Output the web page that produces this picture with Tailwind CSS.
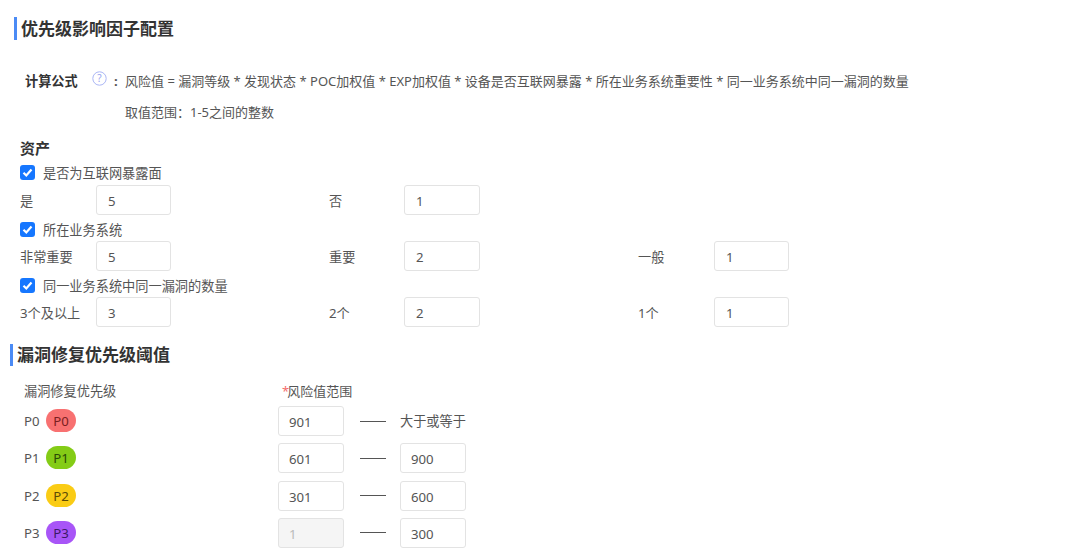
<!DOCTYPE html>
<html lang="zh-CN">
<head>
<meta charset="utf-8">
<script src="https://cdn.jsdelivr.net/npm/@tailwindcss/browser@4"></script>
<title>优先级影响因子配置</title>
</head>
<body class="bg-white">
<main class="w-[1080px] h-[555px] overflow-hidden text-[13.2px] leading-[18px] text-[#555] font-['Noto_Sans','Noto_Sans_CJK_SC',sans-serif]">
  <section class="pl-[14px] pt-[17px]">
    <h2 class="border-l-[3px] border-[#4b8bf5] pl-[4px] h-[23px] text-[17px] leading-[23px] font-bold text-[#333]">优先级影响因子配置</h2>
  </section>
  <section class="pl-[25px] pt-[32px] flex items-start h-[18px] box-content">
    <b class="w-[67px] text-[#333] font-bold">计算公式</b>
    <svg class="w-[15px] h-[15px] -mt-[1px]" viewBox="0 0 15 15" fill="none"><circle cx="7.5" cy="7.5" r="6.7" stroke="#aab6f5"/><text x="7.5" y="11" text-anchor="middle" font-size="10" fill="#96a4f0">?</text></svg>
    <span class="w-[18px] pl-[7px] font-bold">:</span>
    <span class="whitespace-nowrap text-[13px]">风险值 = 漏洞等级 * 发现状态 * POC加权值 * EXP加权值 * 设备是否互联网暴露 * 所在业务系统重要性 * 同一业务系统中同一漏洞的数量</span>
  </section>
  <p class="pl-[125px] pt-[13px] text-[13px]">取值范围：1-5之间的整数</p>
  <section class="pl-[20px] pt-[17px]">
    <h3 class="text-[15px] leading-[20px] font-bold text-[#333]">资产</h3>
    <label class="flex items-center gap-[8px] h-[18px] mt-[5px]">
      <span class="w-[15px] h-[15px] rounded-[3px] bg-[#1677ff] flex items-center justify-center"><svg class="w-[11px] h-[11px]" viewBox="0 0 11 11" fill="none"><path d="M1.5 5.8 4.3 8.5 9.5 2.5" stroke="#fff" stroke-width="2.2"/></svg></span>
      <span class="pt-[1px]">是否为互联网暴露面</span>
    </label>
    <div class="grid grid-cols-[76px_75px_158px_75px_76px_158px_76px_75px] items-center h-[30px] mt-[4px]">
      <span class="pt-[2px]">是</span><span class="h-[30px] border border-[#e3e3e3] rounded-[3px] pl-[11px] leading-[30px]">5</span><span class="col-start-4 pt-[2px]">否</span><span class="h-[30px] col-start-5 border border-[#e3e3e3] rounded-[3px] pl-[11px] leading-[30px]">1</span>
    </div>
    <label class="flex items-center gap-[8px] h-[18px] mt-[5px]">
      <span class="w-[15px] h-[15px] rounded-[3px] bg-[#1677ff] flex items-center justify-center"><svg class="w-[11px] h-[11px]" viewBox="0 0 11 11" fill="none"><path d="M1.5 5.8 4.3 8.5 9.5 2.5" stroke="#fff" stroke-width="2.2"/></svg></span>
      <span class="pt-[1px]">所在业务系统</span>
    </label>
    <div class="grid grid-cols-[76px_75px_158px_75px_76px_158px_76px_75px] items-center h-[30px] mt-[3px]">
      <span class="pt-[2px]">非常重要</span><span class="h-[30px] border border-[#e3e3e3] rounded-[3px] pl-[11px] leading-[30px]">5</span><span class="col-start-4 pt-[2px]">重要</span><span class="h-[30px] border border-[#e3e3e3] rounded-[3px] pl-[11px] leading-[30px]">2</span><span class="col-start-7 pt-[2px]">一般</span><span class="h-[30px] border border-[#e3e3e3] rounded-[3px] pl-[11px] leading-[30px]">1</span>
    </div>
    <label class="flex items-center gap-[8px] h-[18px] mt-[5px]">
      <span class="w-[15px] h-[15px] rounded-[3px] bg-[#1677ff] flex items-center justify-center"><svg class="w-[11px] h-[11px]" viewBox="0 0 11 11" fill="none"><path d="M1.5 5.8 4.3 8.5 9.5 2.5" stroke="#fff" stroke-width="2.2"/></svg></span>
      <span class="pt-[1px]">同一业务系统中同一漏洞的数量</span>
    </label>
    <div class="grid grid-cols-[76px_75px_158px_75px_76px_158px_76px_75px] items-center h-[30px] mt-[3px]">
      <span class="pt-[2px] whitespace-nowrap">3个及以上</span><span class="h-[30px] border border-[#e3e3e3] rounded-[3px] pl-[11px] leading-[30px]">3</span><span class="col-start-4 pt-[2px]">2个</span><span class="h-[30px] border border-[#e3e3e3] rounded-[3px] pl-[11px] leading-[30px]">2</span><span class="col-start-7 pt-[2px]">1个</span><span class="h-[30px] border border-[#e3e3e3] rounded-[3px] pl-[11px] leading-[30px]">1</span>
    </div>
  </section>
  <section class="pl-[10px] pt-[17px]">
    <h2 class="border-l-[3px] border-[#4b8bf5] pl-[4px] h-[22px] text-[17px] leading-[22px] font-bold text-[#333]">漏洞修复优先级阈值</h2>
  </section>
  <section class="pl-[24px] pt-[16px]">
    <div class="grid grid-cols-[254px_66px_56px_66px] items-center h-[18px] mb-[6px]">
      <span>漏洞修复优先级</span><span class="pl-[4px] whitespace-nowrap text-[13px]"><i class="not-italic text-[#f56c6c] mr-[-2px]">*</i>风险值范围</span>
    </div>
    <div class="grid grid-cols-[254px_66px_56px_66px] grid-rows-[30px_30px_30px_30px] gap-y-[7.33px] items-center">
      <div class="flex items-center"><span class="w-[22px]">P0</span><span class="w-[30px] h-[23px] rounded-full bg-[#f87171] text-[#7a2020] text-center leading-[24px] -mt-[1px]">P0</span></div>
      <span class="h-[30px] border border-[#e3e3e3] rounded-[3px] pl-[10px] leading-[30px]">901</span>
      <span class="h-px w-[26px] bg-[#555] ml-[16px]"></span>
      <span class="whitespace-nowrap">大于或等于</span>

      <div class="flex items-center"><span class="w-[22px]">P1</span><span class="w-[30px] h-[23px] rounded-full bg-[#84cc16] text-[#2a4a05] text-center leading-[24px] -mt-[1px]">P1</span></div>
      <span class="h-[30px] border border-[#e3e3e3] rounded-[3px] pl-[10px] leading-[30px]">601</span>
      <span class="h-px w-[26px] bg-[#555] ml-[16px]"></span>
      <span class="h-[30px] border border-[#e3e3e3] rounded-[3px] pl-[10px] leading-[30px]">900</span>

      <div class="flex items-center"><span class="w-[22px]">P2</span><span class="w-[30px] h-[23px] rounded-full bg-[#facc15] text-[#5c4a05] text-center leading-[24px] -mt-[1px]">P2</span></div>
      <span class="h-[30px] border border-[#e3e3e3] rounded-[3px] pl-[10px] leading-[30px]">301</span>
      <span class="h-px w-[26px] bg-[#555] ml-[16px]"></span>
      <span class="h-[30px] border border-[#e3e3e3] rounded-[3px] pl-[10px] leading-[30px]">600</span>

      <div class="flex items-center"><span class="w-[22px]">P3</span><span class="w-[30px] h-[23px] rounded-full bg-[#a855f7] text-[#3b1a66] text-center leading-[24px] -mt-[1px]">P3</span></div>
      <span class="h-[30px] border border-[#e3e3e3] bg-[#f5f5f5] text-[#bbb] rounded-[3px] pl-[10px] leading-[30px]">1</span>
      <span class="h-px w-[26px] bg-[#555] ml-[16px]"></span>
      <span class="h-[30px] border border-[#e3e3e3] rounded-[3px] pl-[10px] leading-[30px]">300</span>
    </div>
  </section>
</main>
</body>
</html>
